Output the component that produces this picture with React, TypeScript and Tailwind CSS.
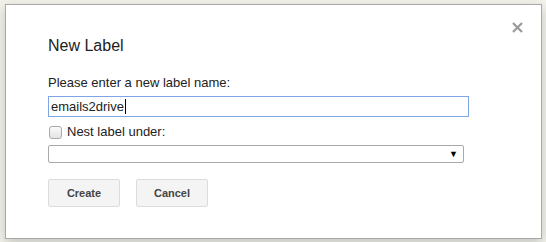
import React from "react";

function CloseIcon() {
  return (
    <svg width="11" height="11" viewBox="0 0 11 11" className="block">
      <path d="M1 1 L10 10 M10 1 L1 10" stroke="#9a9a9a" strokeWidth="2.2" />
    </svg>
  );
}

export default function App() {
  return (
    <div
      className="w-[546px] h-[242px] bg-[#f3f3ec] pl-[5px] pt-[4px] overflow-hidden"
      style={{ fontFamily: '"Liberation Sans", Arial, sans-serif' }}
    >
      <div className="relative w-[537px] h-[235px] border border-[#a8a8a8] bg-white shadow-[0_4px_12px_rgba(0,0,0,0.2)] pl-[42px] pt-[31px]">
        <button className="absolute right-[18px] top-[17px] p-0">
          <CloseIcon />
        </button>

        <div className="text-[16px] leading-[20px] text-[#222]">New Label</div>

        <div className="mt-[19px] text-[13px] leading-[16px] text-[#222]">
          Please enter a new label name:
        </div>

        <div className="mt-[5px] flex h-[21px] w-[421px] items-center border border-[#7ea6e6] pl-[2px] text-[13px] text-[#222]">
          <span>emails2drive</span>
          <span className="ml-px h-[15px] w-px bg-black" />
        </div>

        <div className="mt-[7px] flex h-[16px] items-center gap-[5px] text-[13px] leading-[16px] text-[#222]">
          <span className="ml-[1px] h-[13px] w-[13px] rounded-[3px] border border-[#a9a9a9] bg-gradient-to-b from-[#fafafa] to-[#e4e4e4]" />
          <span>Nest label under:</span>
        </div>

        <div className="mt-[5px] flex h-[18px] w-[416px] items-center justify-end rounded-[2px] border border-[#a9a9a9] pr-[5px]">
          <span className="text-[9px] leading-none text-black">▼</span>
        </div>

        <div className="mt-[16px] flex gap-[16px]">
          <button className="h-[28px] w-[72px] rounded-[2px] border border-[#dcdcdc] bg-[#f4f4f4] text-[11px] font-bold text-[#444]">
            Create
          </button>
          <button className="h-[28px] w-[72px] rounded-[2px] border border-[#dcdcdc] bg-[#f4f4f4] text-[11px] font-bold text-[#444]">
            Cancel
          </button>
        </div>
      </div>
    </div>
  );
}
